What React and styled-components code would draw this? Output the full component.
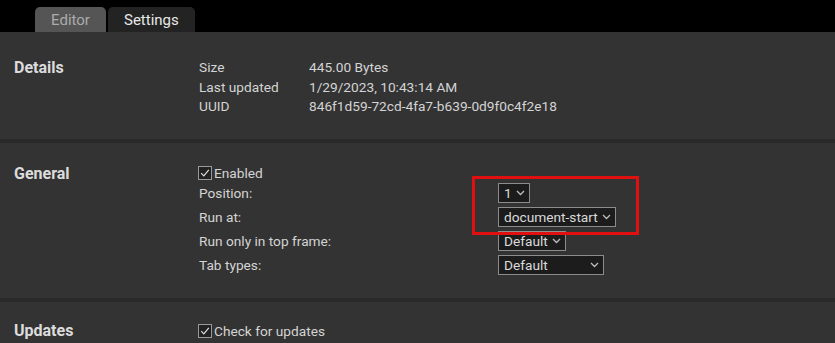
import React from "react";
import styled, { createGlobalStyle } from "styled-components";

const GlobalStyle = createGlobalStyle`
  html, body {
    margin: 0;
    padding: 0;
    background: #333333;
    overflow: hidden;
  }
  body {
    font-family: Roboto, "Liberation Sans", sans-serif;
    font-size: 13.7px;
    color: #d4d4d4;
  }
`;

const TabBar = styled.div`
  height: 32px;
  background: #000;
  display: flex;
  align-items: flex-end;
  gap: 2px;
  padding-left: 35px;
`;

const Tab = styled.div`
  height: 25px;
  padding: 0 ${(p) => (p.$wide ? "16px" : "15px")};
  min-width: ${(p) => (p.$wide ? "85px" : "71px")};
  box-sizing: border-box;
  display: flex;
  align-items: center;
  justify-content: center;
  font-size: 15px;
  border-radius: 5px 5px 0 0;
  background: ${(p) => (p.$active ? "#232323" : "#555555")};
  color: ${(p) => (p.$active ? "#e8e8e8" : "#ababab")};
`;

const Section = styled.section`
  display: flex;
  padding: ${(p) => p.$pad};
  border-bottom: 4px solid #2a2a2a;
`;

const Heading = styled.h2`
  width: 184px;
  margin: 0;
  padding-left: 14px;
  font-size: 16px;
  font-weight: 700;
  line-height: 20px;
  color: #dcdcdc;
  margin-top: ${(p) => p.$offset || "0"};
`;

const InfoGrid = styled.div`
  display: grid;
  grid-template-columns: 110px auto;
  line-height: 19.7px;
  padding: 1px 0 0 1px;
`;

const FormGrid = styled.div`
  position: relative;
  display: grid;
  grid-template-columns: 300px auto;
  row-gap: 4px;
  align-items: center;
`;

const Label = styled.div`
  line-height: 20px;
  padding-left: 1px;
`;

const CheckRow = styled.label`
  grid-column: 1 / -1;
  display: flex;
  align-items: center;
  gap: 2px;
  line-height: 20px;
  margin-bottom: ${(p) => p.$mb || "0"};
`;

const Box = styled.span`
  width: 12px;
  height: 12px;
  border: 1px solid #9a9a9a;
  background: #222;
  display: flex;
  align-items: center;
  justify-content: center;
`;

const Select = styled.div`
  justify-self: start;
  height: 20px;
  box-sizing: border-box;
  width: ${(p) => p.$width || "auto"};
  display: flex;
  align-items: center;
  justify-content: space-between;
  gap: 4px;
  padding: 0 4px 0 5px;
  background: #1c1c1c;
  border: 1px solid #8c8c8c;
  color: #dadada;
`;

const Highlight = styled.div`
  position: absolute;
  left: 274px;
  top: 13px;
  width: 167px;
  height: 59px;
  box-sizing: border-box;
  border: 3px solid #e01010;
  pointer-events: none;
`;

const Check = () => (
  <Box>
    <svg width="10" height="10" viewBox="0 0 10 10">
      <path d="M1.2 5.2 L3.8 7.8 L8.8 1.8" fill="none" stroke="#e0e0e0" strokeWidth="1.2" />
    </svg>
  </Box>
);

const Chevron = () => (
  <svg width="9" height="6" viewBox="0 0 9 6">
    <path d="M1 1 L4.5 4.5 L8 1" fill="none" stroke="#bdbdbd" strokeWidth="1.3" />
  </svg>
);

const Dropdown = ({ value, width }) => (
  <Select $width={width}>
    <span>{value}</span>
    <Chevron />
  </Select>
);

export default function App() {
  return (
    <>
      <GlobalStyle />
      <TabBar>
        <Tab>Editor</Tab>
        <Tab $active $wide>Settings</Tab>
      </TabBar>

      <Section $pad="25px 0 22px 0">
        <Heading $offset="1px">Details</Heading>
        <InfoGrid>
          <span>Size</span>
          <span>445.00 Bytes</span>
          <span>Last updated</span>
          <span>1/29/2023, 10:43:14 AM</span>
          <span>UUID</span>
          <span>846f1d59-72cd-4fa7-b639-0d9f0c4f2e18</span>
        </InfoGrid>
      </Section>

      <Section $pad="20px 0 23px 0">
        <Heading $offset="1px">General</Heading>
        <FormGrid>
          <CheckRow $mb="-4px">
            <Check />
            Enabled
          </CheckRow>
          <Label>Position:</Label>
          <Dropdown value="1" />
          <Label>Run at:</Label>
          <Dropdown value="document-start" />
          <Label>Run only in top frame:</Label>
          <Dropdown value="Default" />
          <Label>Tab types:</Label>
          <Dropdown value="Default" width="106px" />
          <Highlight />
        </FormGrid>
      </Section>

      <Section $pad="18px 0 23px 0">
        <Heading $offset="1px">Updates</Heading>
        <FormGrid>
          <CheckRow>
            <Check />
            Check for updates
          </CheckRow>
        </FormGrid>
      </Section>
    </>
  );
}
